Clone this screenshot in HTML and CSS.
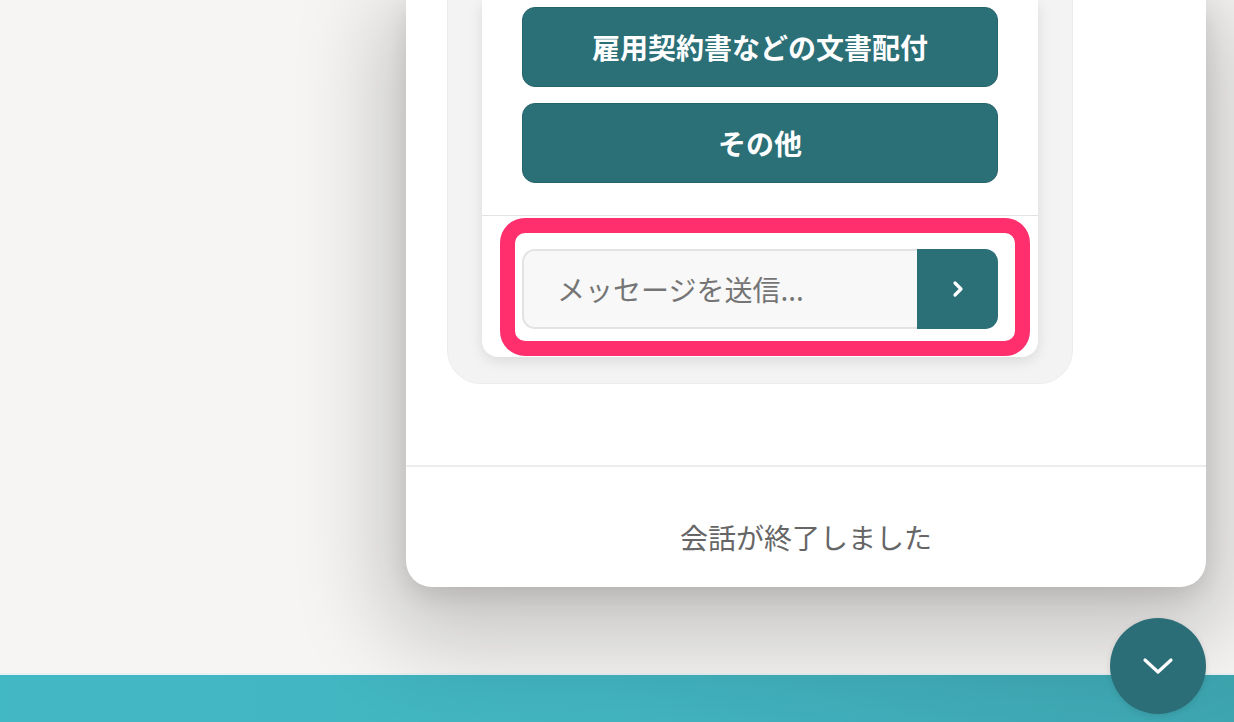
FILE: index.html
```html
<!DOCTYPE html>
<html lang="ja">
<head>
<meta charset="utf-8">
<link rel="stylesheet" href="styles.css">
</head>
<body>
<div class="page">
  <main class="stage">
    <section class="panel">
      <div class="phone">
        <div class="card">
          <div class="choices">
            <button class="choice">雇用契約書などの文書配付</button>
            <button class="choice">その他</button>
          </div>
          <div class="composer">
            <div class="input-row">
              <div class="input">メッセージを送信...</div>
              <div class="send">
                <svg width="14" height="18" viewBox="0 0 14 18"><polyline points="4,3 10,9 4,15" fill="none" stroke="#fff" stroke-width="3.2" stroke-linecap="round" stroke-linejoin="round"/></svg>
              </div>
            </div>
          </div>
        </div>
      </div>
      <div class="spacer"></div>
      <footer class="ended">会話が終了しました</footer>
    </section>
  </main>
  <div class="bar"></div>
  <button class="fab">
    <svg width="34" height="20" viewBox="0 0 34 20"><polyline points="4,4 17,16 30,4" fill="none" stroke="#fff" stroke-width="3.2" stroke-linecap="round" stroke-linejoin="round"/></svg>
  </button>
</div>
</body>
</html>
```
FILE: styles.css
```css
* { box-sizing: border-box; }
html, body { margin: 0; padding: 0; }
body {
  width: 1234px;
  height: 722px;
  overflow: hidden;
  font-family: "Noto Sans CJK JP", "Noto Sans", sans-serif;
  background: #f6f5f3;
}
.page {
  position: relative;
  width: 1234px;
  height: 722px;
  display: flex;
  flex-direction: column;
}
.stage {
  height: 673px;
  padding-left: 406px;
  background: #f6f5f3;
  position: relative;
  z-index: 2;
}
.panel {
  width: 800px;
  height: 587px;
  background: #fff;
  border-radius: 0 0 26px 26px;
  box-shadow: 0 30px 90px 24px rgba(0,0,0,0.2), 0 8px 24px rgba(0,0,0,0.1);
  display: flex;
  flex-direction: column;
}
.phone {
  margin-left: 41px;
  width: 626px;
  height: 384px;
  background: #f3f3f3;
  border: 1px solid #ececec;
  border-top: none;
  border-radius: 0 0 34px 34px;
  padding: 0 34px 27px 34px;
}
.card {
  height: 357px;
  background: #fff;
  border-radius: 0 0 16px 16px;
  box-shadow: 0 4px 14px rgba(0,0,0,0.10);
  display: flex;
  flex-direction: column;
}
.choices {
  padding: 7px 40px 32px 40px;
  display: flex;
  flex-direction: column;
  gap: 16px;
  border-bottom: 1px solid #e3e3e3;
}
.choice {
  height: 80px;
  border: 1px solid #24646c;
  border-radius: 13px;
  background: #2b6f77;
  color: #fff;
  font-family: "Noto Sans CJK JP", sans-serif;
  font-size: 28px;
  font-weight: 700;
  padding: 0;
}
.composer {
  padding: 33px 40px 0 40px;
}
.input-row {
  position: relative;
  display: flex;
  height: 80px;
}
.input-row::after {
  content: "";
  position: absolute;
  left: -22px;
  right: -32px;
  top: -31px;
  bottom: -27px;
  border: 15px solid #ff2f6d;
  border-radius: 25px;
}
.input {
  flex: 1;
  background: #f8f8f8;
  border: 2px solid #e3e3e3;
  border-right: none;
  border-radius: 13px 0 0 13px;
  padding-left: 33px;
  display: flex;
  align-items: center;
  font-size: 28px;
  color: #757575;
}
.send {
  width: 81px;
  background: #2b6f77;
  border-radius: 0 13px 13px 0;
  display: flex;
  align-items: center;
  justify-content: center;
}
.spacer {
  height: 83px;
  border-bottom: 2px solid #ececec;
}
.ended {
  flex: 1;
  display: flex;
  align-items: center;
  justify-content: center;
  padding-top: 20px;
  font-size: 28px;
  color: #666;
}
.bar {
  height: 49px;
  border-top: 2px solid #e9f1f2;
  background: linear-gradient(90deg, #43b8c5 0%, #42b4c0 50%, #3da5b0 100%);
}
.fab {
  position: absolute;
  right: 28px;
  bottom: 8px;
  width: 96px;
  height: 96px;
  border-radius: 50%;
  border: none;
  background: #2b6e77;
  z-index: 3;
  display: flex;
  align-items: center;
  justify-content: center;
  padding: 0;
  box-shadow: 0 2px 6px rgba(0,0,0,0.1);
}
```
